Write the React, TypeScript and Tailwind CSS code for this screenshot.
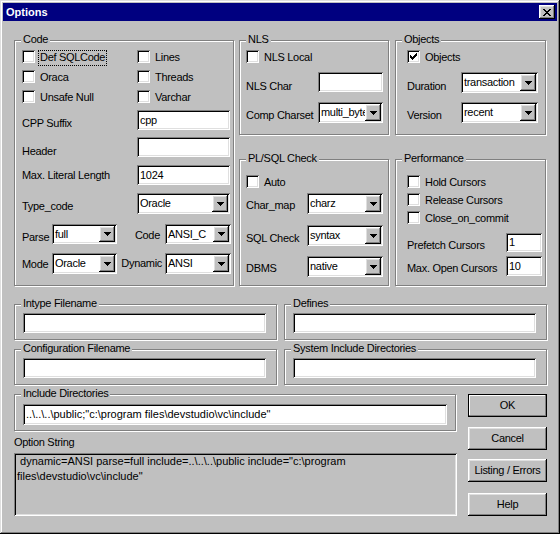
import React from 'react';

// Win95 bevels, drawn with inset shadows so they take no layout space
const SUNKEN = 'shadow-[inset_1px_1px_#808080,inset_-1px_-1px_#fff,inset_2px_2px_#000,inset_-2px_-2px_#dfdfdf]';
const RAISED = 'shadow-[inset_-1px_-1px_#000,inset_1px_1px_#fff,inset_-2px_-2px_#808080,inset_2px_2px_#dfdfdf]';
const ETCHED = 'border border-[#808080] shadow-[inset_1px_1px_#fff,1px_1px_#fff]';

const CheckMark = () => (
  <svg width="7" height="7" viewBox="0 0 7 7" shapeRendering="crispEdges">
    <rect x="6" y="0" width="1" height="1" />
    <rect x="5" y="1" width="2" height="1" />
    <rect x="0" y="2" width="1" height="1" />
    <rect x="4" y="2" width="3" height="1" />
    <rect x="0" y="3" width="2" height="1" />
    <rect x="3" y="3" width="3" height="1" />
    <rect x="0" y="4" width="5" height="1" />
    <rect x="1" y="5" width="3" height="1" />
    <rect x="2" y="6" width="1" height="1" />
  </svg>
);

const ArrowDown = () => (
  <svg width="7" height="4" viewBox="0 0 7 4" shapeRendering="crispEdges">
    <rect x="0" y="0" width="7" height="1" />
    <rect x="1" y="1" width="5" height="1" />
    <rect x="2" y="2" width="3" height="1" />
    <rect x="3" y="3" width="1" height="1" />
  </svg>
);

const CloseX = () => (
  <svg width="8" height="7" viewBox="0 0 8 7" shapeRendering="crispEdges">
    <rect x="0" y="0" width="2" height="1" />
    <rect x="6" y="0" width="2" height="1" />
    <rect x="1" y="1" width="2" height="1" />
    <rect x="5" y="1" width="2" height="1" />
    <rect x="2" y="2" width="4" height="1" />
    <rect x="3" y="3" width="2" height="1" />
    <rect x="2" y="4" width="4" height="1" />
    <rect x="1" y="5" width="2" height="1" />
    <rect x="5" y="5" width="2" height="1" />
    <rect x="0" y="6" width="2" height="1" />
    <rect x="6" y="6" width="2" height="1" />
  </svg>
);

interface GroupProps {
  title: string;
  className?: string;
  children?: React.ReactNode;
}

const Group = ({ title, className = '', children }: GroupProps) => (
  <div className={`relative ${ETCHED} ${className}`}>
    <span className="absolute left-[6px] -top-[8px] bg-[#c0c0c0] px-[2px] leading-[13px] whitespace-nowrap">
      {title}
    </span>
    {children}
  </div>
);

const Check = ({ label, checked, focus }: { label: string; checked?: boolean; focus?: boolean }) => (
  <div className="flex items-start h-[16px]">
    <div className={`w-[13px] h-[13px] shrink-0 bg-white ${SUNKEN} flex items-center justify-center`}>
      {checked && <CheckMark />}
    </div>
    <span
      className={`ml-[3px] h-[16px] px-[1px] border leading-[12px] whitespace-nowrap ${
        focus ? 'border-dotted border-black' : 'border-transparent'
      }`}
    >
      {label}
    </span>
  </div>
);

const Field = ({ value = '', className = '' }: { value?: string; className?: string }) => (
  <div className={`bg-white ${SUNKEN} pl-[3px] flex items-center whitespace-nowrap overflow-hidden ${className}`}>
    {value}
  </div>
);

const Select = ({ value, className = '' }: { value: string; className?: string }) => (
  <div className={`bg-white ${SUNKEN} p-[2px] flex items-stretch ${className}`}>
    <div className="flex-1 min-w-0 pl-[1px] flex items-center whitespace-nowrap overflow-hidden">{value}</div>
    <div className={`w-[16px] shrink-0 bg-[#c0c0c0] ${RAISED} flex items-center justify-center`}>
      <ArrowDown />
    </div>
  </div>
);

const Label = ({ text, className = '' }: { text: string; className?: string }) => (
  <span className={`shrink-0 whitespace-nowrap ${className}`}>{text}</span>
);

const Btn = ({ label, isDefault, className = '' }: { label: string; isDefault?: boolean; className?: string }) => (
  <div
    className={`w-[79px] h-[23px] flex items-center justify-center whitespace-nowrap ${
      isDefault ? 'shadow-[inset_0_0_0_1px_#000,inset_-2px_-2px_#808080,inset_2px_2px_#fff]' : RAISED
    } ${className}`}
  >
    {label}
  </div>
);

export default function App() {
  return (
    <div className="w-[560px] h-[534px] bg-[#c0c0c0] text-black text-[11px] leading-[13px] tracking-[-0.3px] font-['Liberation_Sans',Arial,sans-serif] shadow-[inset_-1px_-1px_#000,inset_1px_1px_#dfdfdf,inset_-2px_-2px_#808080,inset_2px_2px_#fff] flex flex-col overflow-hidden select-none">
      {/* Title bar */}
      <div className="mx-[3px] mt-[3px] h-[18px] bg-[#000080] flex items-center justify-between pl-[3px] pr-[2px]">
        <span className="text-white font-bold tracking-normal">Options</span>
        <div className={`w-[16px] h-[14px] bg-[#c0c0c0] ${RAISED} flex items-center justify-center`}>
          <CloseX />
        </div>
      </div>

      <div className="pl-[14px] mt-[19px] flex flex-col">
        {/* Upper groups */}
        <div className="flex items-start">
          <Group title="Code" className="w-[220px] h-[246px] pl-[7px] pt-[9px]">
            <div className="grid grid-cols-[115px_auto] gap-y-[4px]">
              <Check label="Def SQLCode" focus />
              <Check label="Lines" />
              <Check label="Oraca" />
              <Check label="Threads" />
              <Check label="Unsafe Null" />
              <Check label="Varchar" />
            </div>
            <div className="mt-[4px] flex items-center h-[20px]">
              <Label text="CPP Suffix" className="w-[115px] pt-[6px]" />
              <Field value="cpp" className="w-[93px] h-[20px]" />
            </div>
            <div className="mt-[7px] flex items-center h-[20px]">
              <Label text="Header" className="w-[115px] pt-[9px]" />
              <Field className="w-[93px] h-[20px]" />
            </div>
            <div className="mt-[8px] flex items-center h-[20px]">
              <Label text="Max. Literal Length" className="w-[115px]" />
              <Field value="1024" className="w-[93px] h-[20px]" />
            </div>
            <div className="mt-[8px] flex items-center h-[21px]">
              <Label text="Type_code" className="w-[115px] pt-[6px]" />
              <Select value="Oracle" className="w-[93px] h-[21px]" />
            </div>
            <div className="mt-[10px] flex items-center h-[20px]">
              <Label text="Parse" className="w-[30px] pt-[6px]" />
              <Select value="full" className="w-[65px] h-[20px]" />
              <Label text="Code" className="w-[48px] text-right pr-[5px] pt-[3px]" />
              <Select value="ANSI_C" className="w-[66px] h-[20px]" />
            </div>
            <div className="mt-[9px] flex items-center h-[21px]">
              <Label text="Mode" className="w-[30px] pt-[2px]" />
              <Select value="Oracle" className="w-[65px] h-[21px]" />
              <Label text="Dynamic" className="w-[48px] text-right pr-[3px]" />
              <Select value="ANSI" className="w-[66px] h-[21px]" />
            </div>
          </Group>

          <div className="ml-[5px] flex flex-col">
            <div className="flex">
              <Group title="NLS" className="w-[150px] h-[95px] pl-[6px] pt-[9px]">
                <Check label="NLS Local" />
                <div className="mt-[6px] flex items-center h-[20px]">
                  <Label text="NLS Char" className="w-[72px] pt-[9px]" />
                  <Field className="w-[65px] h-[20px]" />
                </div>
                <div className="mt-[10px] flex items-center h-[21px]">
                  <Label text="Comp Charset" className="w-[72px] pt-[6px]" />
                  <Select value="multi_byte" className="w-[65px] h-[21px]" />
                </div>
              </Group>
              <Group title="Objects" className="ml-[6px] w-[151px] h-[95px] pl-[11px] pt-[9px]">
                <Check label="Objects" checked />
                <div className="mt-[6px] flex items-center h-[21px]">
                  <Label text="Duration" className="w-[54px] pt-[8px]" />
                  <Select value="transaction" className="w-[77px] h-[21px]" />
                </div>
                <div className="mt-[9px] flex items-center h-[21px]">
                  <Label text="Version" className="w-[54px] pt-[6px]" />
                  <Select value="recent" className="w-[77px] h-[21px]" />
                </div>
              </Group>
            </div>

            <div className="mt-[24px] flex">
              <Group title="PL/SQL Check" className="w-[150px] h-[127px] pl-[6px] pt-[15px]">
                <Check label="Auto" />
                <div className="mt-[2px] flex items-center h-[21px]">
                  <Label text="Char_map" className="w-[61px] pt-[4px]" />
                  <Select value="charz" className="w-[76px] h-[21px]" />
                </div>
                <div className="mt-[11px] flex items-center h-[21px]">
                  <Label text="SQL Check" className="w-[61px] pt-[6px]" />
                  <Select value="syntax" className="w-[76px] h-[21px]" />
                </div>
                <div className="mt-[10px] flex items-center h-[21px]">
                  <Label text="DBMS" className="w-[61px] pt-[3px]" />
                  <Select value="native" className="w-[76px] h-[21px]" />
                </div>
              </Group>
              <Group title="Performance" className="ml-[6px] w-[151px] h-[127px] pl-[11px] pt-[15px]">
                <div className="flex flex-col gap-[2px]">
                  <Check label="Hold Cursors" />
                  <Check label="Release Cursors" />
                  <Check label="Close_on_commit" />
                </div>
                <div className="mt-[6px] flex items-center h-[19px]">
                  <Label text="Prefetch Cursors" className="w-[99px] pt-[6px]" />
                  <Field value="1" className="w-[36px] h-[19px]" />
                </div>
                <div className="mt-[4px] flex items-center h-[20px]">
                  <Label text="Max. Open Cursors" className="w-[99px] pt-[5px]" />
                  <Field value="10" className="w-[36px] h-[20px]" />
                </div>
              </Group>
            </div>
          </div>
        </div>

        {/* File name groups */}
        <div className="mt-[18px] flex">
          <Group title="Intype Filename" className="w-[263px] h-[36px] pl-[8px] pt-[8px]">
            <Field className="w-[243px] h-[20px]" />
          </Group>
          <Group title="Defines" className="ml-[7px] w-[263px] h-[36px] pl-[8px] pt-[8px]">
            <Field className="w-[243px] h-[20px]" />
          </Group>
        </div>
        <div className="mt-[9px] flex">
          <Group title="Configuration Filename" className="w-[263px] h-[36px] pl-[8px] pt-[8px]">
            <Field className="w-[243px] h-[20px]" />
          </Group>
          <Group title="System Include Directories" className="ml-[7px] w-[263px] h-[36px] pl-[8px] pt-[8px]">
            <Field className="w-[243px] h-[20px]" />
          </Group>
        </div>

        {/* Include dirs, option string, buttons */}
        <div className="mt-[9px] flex items-start">
          <div className="w-[443px] flex flex-col">
            <Group title="Include Directories" className="w-[442px] h-[37px] pl-[8px] pt-[9px]">
              <Field
                value={'..\\..\\..\\public;"c:\\program files\\devstudio\\vc\\include"'}
                className="w-[424px] h-[21px] tracking-normal"
              />
            </Group>
            <span className="mt-[5px]">Option String</span>
            <div
              className={`mt-[4px] w-[443px] h-[63px] ${SUNKEN} pl-[3px] pt-[1px] leading-[15px] tracking-normal whitespace-pre`}
            >
              {' dynamic=ANSI parse=full include=..\\..\\..\\public include="c:\\program\nfiles\\devstudio\\vc\\include"'}
            </div>
          </div>
          <div className="ml-[11px] flex flex-col">
            <Btn label="OK" isDefault />
            <Btn label="Cancel" className="mt-[10px]" />
            <Btn label="Listing / Errors" className="mt-[9px]" />
            <Btn label="Help" className="mt-[11px]" />
          </div>
        </div>
      </div>
    </div>
  );
}
